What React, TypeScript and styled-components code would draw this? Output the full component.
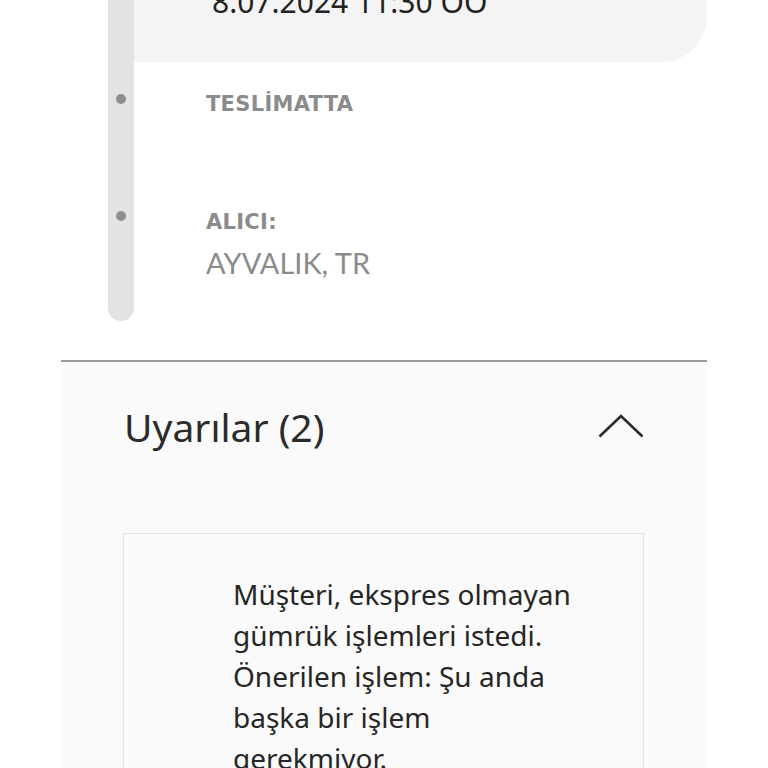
import React from "react"
import styled, { createGlobalStyle } from "styled-components";

const GlobalStyle = createGlobalStyle`
  html, body {
    margin : 0;
    padding : 0;
    background : #ffffff;
    overflow : hidden;
  }
  body {
    font-family : "Noto Sans", "Open Sans", sans-serif;
  }
`

const Page = styled.div`
  width : 768px;
  height : 768px;
  overflow : hidden;
  box-sizing: border-box;
  padding : 0 61px;
`

const Timeline = styled.div`
  display : flex;
  flex-direction: column;
  margin-top : -40px;
`

const Row = styled.div`
  display : flex;
  align-items: stretch;
`

type SegProps = {
    last? : boolean
}

const RailSeg = styled.div<SegProps>`
  width : 26px;
  margin-left : 47px;
  flex-shrink: 0;
  background : #e3e3e3;
  border-radius: ${(props) => props.last ? "0 0 13px 13px" : "0"};
  display : flex;
  justify-content: center;
`

type DotProps = {
    offset : number
}

const Dot = styled.span<DotProps>`
  width : 10px;
  height : 10px;
  border-radius: 50%;
  background : #8e8e8e;
  margin-top : ${(props) => props.offset}px;
`

const DateCard = styled.div`
  flex : 1;
  background : #f4f4f4;
  border-bottom-right-radius: 46px;
  padding : 24px 0 42px 78px;
  font-size : 30px;
  line-height : 36px;
  color : #222;
`

type StepProps = {
    height : number
    top : number
}

const Step = styled.div<StepProps>`
  flex : 1;
  height : ${(props) => props.height}px;
  box-sizing: border-box;
  padding : ${(props) => props.top}px 0 0 72px;
`

const Label = styled.div`
  font-family : "DejaVu Sans", "Open Sans", sans-serif;
  font-weight : 700;
  font-size : 21px;
  line-height : 24px;
  letter-spacing: 0.3px;
  color : #8b8b8b;
`

const Value = styled.div`
  font-family : "Lato", "Open Sans", sans-serif;
  font-size : 29px;
  line-height : 34px;
  color : #8b8b8b;
  margin-top : 12px;
`

const Divider = styled.div`
  height : 2px;
  background : #9a9a9a;
  margin-top : 39px;
`

const Panel = styled.section`
  background : #fafafa;
  min-height : 420px;
  padding : 0 63px 0 62px;
`

const PanelHeader = styled.div`
  height : 128px;
  display : flex;
  align-items: center;
  justify-content: space-between;
  padding-left : 1px;
`

const PanelTitle = styled.h2`
  margin : 0;
  font-family : "Noto Sans", sans-serif;
  font-weight : 400;
  font-size : 39px;
  color : #2b2b2b;
`

const WarningBox = styled.div`
  margin-top : 43px;
  border : 1px solid #e4e4e4;
  padding : 40px 40px 40px 109px;
`

const WarningText = styled.p`
  margin : 0;
  max-width : 345px;
  font-family : "Noto Sans", sans-serif;
  font-size : 28px;
  line-height : 41px;
  color : #262626;
`

const ChevronUp = () => (
    <svg width="46" height="26" viewBox="0 0 46 26" fill="none">
        <path d="M1.5 23.5 L23 3 L44.5 23.5" stroke="#2b2b2b" strokeWidth="2.6" />
    </svg>
)

const App = () => {
    return (
        <>
            <GlobalStyle/>
            <Page>
                <Timeline>
                    <Row>
                        <RailSeg/>
                        <DateCard>8.07.2024 11:30 ÖÖ</DateCard>
                    </Row>
                    <Row>
                        <RailSeg>
                            <Dot offset={32}/>
                        </RailSeg>
                        <Step height={98} top={30}>
                            <Label>TESLİMATTA</Label>
                        </Step>
                    </Row>
                    <Row>
                        <RailSeg last>
                            <Dot offset={51}/>
                        </RailSeg>
                        <Step height={161} top={50}>
                            <Label>ALICI:</Label>
                            <Value>AYVALIK, TR</Value>
                        </Step>
                    </Row>
                </Timeline>
                <Divider/>
                <Panel>
                    <PanelHeader>
                        <PanelTitle>Uyarılar (2)</PanelTitle>
                        <ChevronUp/>
                    </PanelHeader>
                    <WarningBox>
                        <WarningText>
                            Müşteri, ekspres olmayan gümrük işlemleri istedi. Önerilen işlem: Şu anda başka bir işlem gerekmiyor.
                        </WarningText>
                    </WarningBox>
                </Panel>
            </Page>
        </>
    )
}

export default App
